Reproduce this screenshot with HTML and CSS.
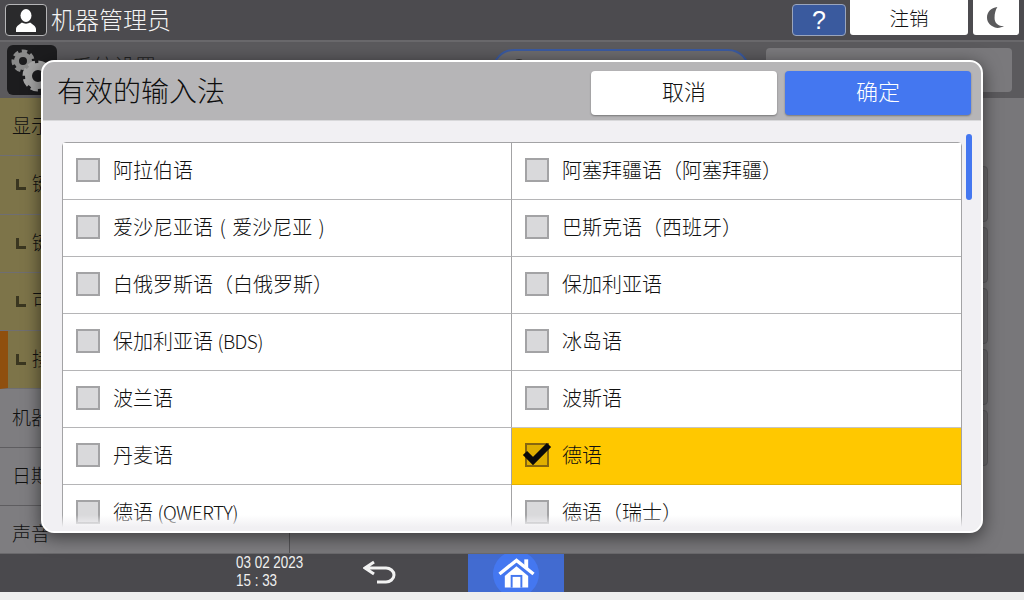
FILE: index.html
```html
<!DOCTYPE html>
<html lang="zh-CN">
<head>
<meta charset="utf-8">
<title>有效的输入法</title>
<link rel="stylesheet" href="styles.css">
</head>
<body>
<div class="screen">
  <header class="topbar">
    <div class="user-btn">
      <svg class="user-icon" viewBox="0 0 20 23"><ellipse cx="10" cy="6.500" rx="5.500" ry="6.500"/><path d="M0 23v-3c0-3 4-5 6-6.500 2 1.500 6 1.500 8 0 2 1.500 6 3.500 6 6.500v3z"/></svg>
    </div>
    <div class="user-name">机器管理员</div>
    <div class="help-btn">?</div>
    <div class="logout-btn">注销</div>
    <div class="moon-btn">
      <svg class="moon-icon" viewBox="0 0 18 22"><path d="M11 0C4 1 0 5.500 0 11s4 10 11 11c3 0 5-1 7-2-6 .5-10-3-10-8.500C8 7 9 3 11 0z"/></svg>
    </div>
  </header>
  <main class="main">
    <div class="title-row">
      <div class="gear-box">
        <svg class="gear-icon" viewBox="0 0 50 50">
          <circle class="gear-teeth" cx="16" cy="16" r="9"/>
          <circle class="gear-ring" cx="16" cy="16" r="6.500"/>
          <circle class="gear-teeth big" cx="31" cy="31" r="13"/>
          <circle class="gear-ring big" cx="31" cy="31" r="9.500"/>
        </svg>
      </div>
      <div class="page-title">系统设置</div>
      <div class="search-pill"><span class="search-dot"></span></div>
      <div class="title-btn"></div>
    </div>
    <div class="content">
      <nav class="sidebar">
        <div class="side-item gold">显示设置</div>
        <div class="side-item gold"><span class="corner"></span>键盘</div>
        <div class="side-item gold"><span class="corner"></span>键盘</div>
        <div class="side-item gold"><span class="corner"></span>可选</div>
        <div class="side-item gold active"><span class="corner"></span>接口</div>
        <div class="side-item">机器</div>
        <div class="side-item">日期</div>
        <div class="side-item">声音</div>
      </nav>
      <section class="panel">
        <div class="panel-btn"></div>
        <div class="panel-btn"></div>
        <div class="panel-btn"></div>
        <div class="panel-btn"></div>
        <div class="panel-btn"></div>
      </section>
    </div>
  </main>
  <footer class="footer">
    <div class="clock"><div>03 02 2023</div><div>15 : 33</div></div>
    <svg class="back-icon" viewBox="0 0 34 24"><path d="M11 2 2 8l9 6M2 8h21c4 0 8 3 8 7s-4 7-8 7h-9"/></svg>
    <div class="home-tab">
      <span class="home-glow"></span>
      <svg class="home-icon" viewBox="0 0 38 30">
        <path class="roof" d="M1.500 16 19 2l17.500 14"/>
        <path class="chimney" d="M27 1h4v9h-4z"/>
        <path class="house" d="M7 18 19 8l12 10v12H7z"/>
        <path class="door-gap" d="M13 17h12v13H13z"/>
        <path class="house" d="M15 19h8v11h-8z"/>
      </svg>
    </div>
  </footer>
  <div class="strip"></div>

  <div class="dialog">
    <div class="dialog-head">
      <div class="dialog-title">有效的输入法</div>
      <div class="btn btn-cancel">取消</div>
      <div class="btn btn-ok">确定</div>
    </div>
    <div class="dialog-body">
      <div class="list">
        <div class="row"><span class="check"></span>阿拉伯语</div>
        <div class="row"><span class="check"></span>阿塞拜疆语（阿塞拜疆）</div>
        <div class="row"><span class="check"></span><span class="spaced">爱沙尼亚语 ( 爱沙尼亚 )</span></div>
        <div class="row"><span class="check"></span>巴斯克语（西班牙）</div>
        <div class="row"><span class="check"></span>白俄罗斯语（白俄罗斯）</div>
        <div class="row"><span class="check"></span>保加利亚语</div>
        <div class="row"><span class="check"></span><span>保加利亚语 <span class="latin">(BDS)</span></span></div>
        <div class="row"><span class="check"></span>冰岛语</div>
        <div class="row"><span class="check"></span>波兰语</div>
        <div class="row"><span class="check"></span>波斯语</div>
        <div class="row"><span class="check"></span>丹麦语</div>
        <div class="row selected"><span class="check on"><svg class="tick" viewBox="0 0 30 24"><path d="M3 12l8 8L27 4"/></svg></span>德语</div>
        <div class="row"><span class="check"></span><span>德语 <span class="latin">(QWERTY)</span></span></div>
        <div class="row"><span class="check"></span>德语（瑞士）</div>
      </div>
      <div class="scrollbar"></div>
      <div class="fade"></div>
    </div>
  </div>
</div>
</body>
</html>
```

FILE: styles.css
```css
* { box-sizing: border-box; }
html, body { margin: 0; padding: 0; }
body { font-family: "Noto Sans CJK SC", "Noto Sans", sans-serif; font-weight: 300; text-spacing-trim: space-all; }
.screen { position: relative; width: 1024px; height: 600px; overflow: hidden; display: flex; flex-direction: column; background: #eeeeee; }

.topbar { height: 42px; flex: none; display: flex; align-items: flex-start; background: #4c4b4f; border-bottom: 2px solid #69686b; color: #fff; }
.user-btn { width: 42px; height: 32px; margin: 4px 0 0 5px; background: #2a2a2c; border: 1px solid #b5b5b7; border-radius: 4px; display: flex; align-items: center; justify-content: center; }
.user-icon { width: 20px; height: 23px; fill: #fff; }
.user-name { margin: 1px auto 0 4px; font-size: 24px; line-height: 36px; color: #f4f4f4; }
.help-btn { width: 54px; height: 32px; margin-top: 4px; background: #3a5a9e; border: 1px solid #9aa5bd; border-radius: 4px; text-align: center; font: 400 25px/30px "Liberation Sans", sans-serif; }
.logout-btn { width: 118px; height: 35px; margin-left: 4px; background: #fff; border-radius: 0 0 3px 3px; color: #111; text-align: center; font-size: 19.500px; line-height: 35px; }
.moon-btn { width: 46px; height: 35px; margin: 0 5px 0 5px; background: #fff; border-radius: 0 0 3px 3px; display: flex; align-items: center; justify-content: center; }
.moon-icon { width: 17px; height: 21px; fill: #5a5a5c; margin-left: -2px; }

.main { flex: 1; min-height: 0; display: flex; flex-direction: column; background: #78777a; }
.title-row { height: 56px; flex: none; display: flex; background: #5b5a5d; }
.gear-box { width: 50px; height: 50px; margin: 3px 0 0 7px; background: #1c1c1e; border-radius: 6px; }
.gear-icon { display: block; width: 50px; height: 50px; fill: none; }
.gear-teeth { stroke: #8a8a8a; stroke-width: 5; stroke-dasharray: 5 3.200; fill: none; }
.gear-ring { stroke: #8a8a8a; stroke-width: 5; }
.gear-ring.big { stroke: #a5a5a5; stroke-width: 7; }
.gear-teeth.big { stroke: #a5a5a5; stroke-width: 5; stroke-dasharray: 7 3.200; }
.page-title { margin: 8px 0 0 15px; width: 420px; font-size: 21px; color: #222; }
.search-pill { width: 258px; height: 44px; margin-top: 7px; border: 2px solid #3a5aa0; border-radius: 22px 22px 6px 6px; background: #6c6b6e; padding: 8px 0 0 18px; }
.search-dot { display: block; width: 14px; height: 14px; border-radius: 50%; background: #333; }
.title-btn { width: 246px; height: 44px; margin: 6px 0 0 16px; background: #7a797c; border-radius: 4px; }

.content { flex: 1; min-height: 0; display: flex; }
.sidebar { width: 290px; flex: none; display: flex; flex-direction: column; border-right: 1px solid #545356; }
.side-item { height: 58.300px; flex: none; display: flex; align-items: center; padding: 0 0 4px 12px; font-size: 19px; color: #111; background: #7e7d80; border-bottom: 1px solid #5e5d60; }
.side-item.gold { background: #7d7449; border-bottom-color: #6f6e72; padding-left: 16px; }
.side-item.gold:first-child { padding-left: 12px; }
.side-item.active { border-left: 8px solid #8f4f0e; padding-left: 8px; }
.corner { width: 10px; height: 11px; margin: 4px 6px 0 0; border-left: 3px solid #3a3620; border-bottom: 3px solid #3a3620; flex: none; }
.panel { flex: 1; padding: 68px 36px 0 0; display: flex; flex-direction: column; align-items: flex-end; gap: 5px; overflow: hidden; }
.panel-btn { width: 660px; height: 56px; flex: none; border: 1px solid #5e5d60; border-radius: 4px; background: #6c6b6e; }

.footer { height: 39px; flex: none; position: relative; display: flex; background: #4a494d; border-top: 1px solid #6a696c; color: #f0f0f0; }
.clock { margin-left: 236px; width: 127px; font-family: "Liberation Sans", sans-serif; font-weight: 400; font-size: 17px; line-height: 18px; transform: scaleX(.79); transform-origin: left top; white-space: nowrap; }
.back-icon { width: 34px; height: 24px; margin-top: 6px; fill: none; stroke: #f2f2f2; stroke-width: 3; }
.home-tab { width: 96px; margin-left: 71px; position: relative; overflow: hidden; background: #426bd0; display: flex; justify-content: center; align-items: center; }
.home-glow { position: absolute; left: 25px; top: -3px; width: 46px; height: 46px; border-radius: 50%; background: #4477f0; }
.home-icon { position: relative; width: 37px; height: 30px; }
.roof { fill: none; stroke: #fff; stroke-width: 3.500; }
.chimney { fill: #fff; }
.house { fill: #fff; }
.door-gap { fill: #4477f0; }
.strip { height: 8px; flex: none; background: #eeeeee; }

.dialog { position: absolute; left: 41px; top: 60px; width: 942px; height: 473px; display: flex; flex-direction: column; background: #f1f0f3; border: 2px solid #fff; border-radius: 13px; box-shadow: 0 4px 18px rgba(0,0,0,.55); overflow: hidden; }
.dialog-head { height: 59px; flex: none; display: flex; align-items: flex-start; background: #b6b5b7; border-bottom: 1px solid #d8d8da; padding: 9px 10px 0 14px; }
.dialog-title { flex: 1; font-size: 28px; line-height: 38px; color: #0e0e0e; }
.btn { width: 186px; height: 44px; border-radius: 4px; text-align: center; font-size: 22px; line-height: 39px; box-shadow: 0 1px 2px rgba(0,0,0,.35); }
.btn-cancel { background: #fff; color: #111; margin-right: 8px; }
.btn-ok { background: #4477f0; color: #fff; }
.dialog-body { flex: 1; min-height: 0; position: relative; padding: 21px 0 0 19px; overflow: hidden; }
.list { width: 900px; display: grid; grid-template-columns: 448px 450px; background: #fff; border: 1px solid #a3a3a5; border-radius: 4px 4px 0 0; }
.row { height: 57px; display: flex; align-items: center; padding: 0 0 4px 13px; font-size: 20px; color: #111; background: #fff; border-bottom: 1px solid #b5b5b7; }
.row:nth-child(even) { border-left: 1px solid #a3a3a5; }
.row:nth-child(10) { border-bottom-color: #c5c5c7; }
.check { position: relative; width: 24px; height: 24px; flex: none; margin: 2px 13px 0 0; background: #d9d9db; border: 2px solid #a3a3a5; }
.spaced { word-spacing: 2px; }
.latin { font-size: 19px; letter-spacing: -.5px; }
.row.selected { background: #ffc800; border-bottom-color: #e2b100; }
.check.on { background: #e0af00; border-color: #86660f; }
.tick { position: absolute; left: -5px; top: -4px; width: 30px; height: 24px; fill: none; stroke: #0a0a0a; stroke-width: 6; }
.scrollbar { position: absolute; left: 923px; top: 13px; width: 6px; height: 66px; border-radius: 3px; background: #4477f0; }
.fade { position: absolute; left: 0; right: 0; bottom: 0; height: 16px; background: linear-gradient(rgba(241,240,243,0), #f1f0f3 75%); }
```
